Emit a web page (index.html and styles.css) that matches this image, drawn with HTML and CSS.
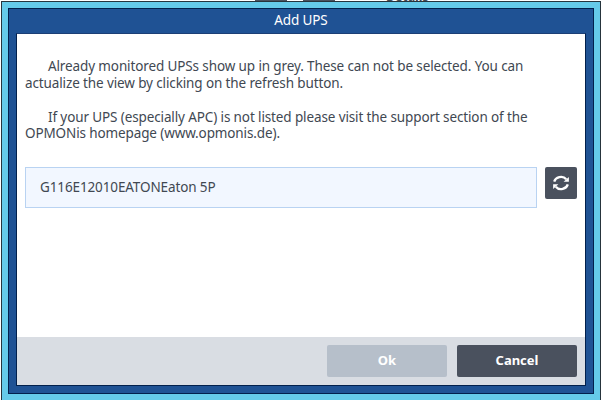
FILE: index.html
```html
<!DOCTYPE html>
<html lang="en">
<head>
    <meta charset="UTF-8">
    <meta name="viewport" content="width=device-width, initial-scale=1.0">
    <title>Add UPS</title>
    <link rel="stylesheet" href="styles.css">
</head>
<body>
    <div class="backdrop">
        <span class="bar bar-one"></span>
        <span class="bar bar-two"></span>
        <span class="behind">Details</span>
    </div>
    <div class="window">
        <div class="frame">
            <h1>Add UPS</h1>
            <div class="dialog">
                <div class="content">
                    <p class="hint">
                        <span class="line first">Already monitored UPSs show up in grey. These can not be selected. You can</span>
                        <span class="line">actualize the view by clicking on the refresh button.</span>
                    </p>
                    <p class="hint">
                        <span class="line first">If your UPS (especially APC) is not listed please visit the support section of the</span>
                        <span class="line last">OPMONis homepage (www.opmonis.de).</span>
                    </p>
                    <div class="device-row">
                        <div class="device">G116E12010EATONEaton 5P</div>
                        <button class="refresh" aria-label="Refresh">
                            <svg width="18" height="18" viewBox="0 0 18 18">
                                <path d="M2.2 7.6C3.4 3.2 10.6 .8 14.2 5.2" fill="none" stroke="#fff" stroke-width="2.3"/>
                                <path d="M16.9 2.9V7.8H11.6z" fill="#fff"/>
                                <path d="M15.8 10.4C14.6 14.8 7.4 17.2 3.8 12.8" fill="none" stroke="#fff" stroke-width="2.3"/>
                                <path d="M1.1 15.1V10.2H6.4z" fill="#fff"/>
                            </svg>
                        </button>
                    </div>
                </div>
                <div class="buttons">
                    <button class="ok" disabled>Ok</button>
                    <button class="cancel">Cancel</button>
                </div>
            </div>
        </div>
    </div>
</body>
</html>
```
FILE: styles.css
```css
* {
    box-sizing: border-box;
}
body {
    margin: 0;
    height: 400px;
    overflow: hidden;
    background-color: white;
    color: #414852;
    font-family: "Noto Sans", "Open Sans", sans-serif;
    font-size: 13.5px;
    letter-spacing: -0.12px;
}
.backdrop {
    position: relative;
    height: 1px;
    overflow: hidden;
}
.bar {
    position: absolute;
    top: 0;
    width: 32px;
    height: 1px;
    background: #4a515e;
}
.bar-one {
    left: 255px;
}
.bar-two {
    left: 303px;
}
.behind {
    position: absolute;
    left: 386px;
    bottom: -4px;
    font-size: 12.5px;
    font-weight: bold;
    line-height: 16px;
}
.window {
    height: 399px;
    margin-left: 1px;
    padding: 6px;
    border: 1px solid #26343c;
    border-bottom: none;
    background: #65cae9;
}
.frame {
    display: flex;
    flex-direction: column;
    height: 386px;
    padding: 0 7px 7px;
    border: 1px solid #02204c;
    background: #1f5294;
}
h1 {
    margin: 0;
    height: 24px;
    line-height: 22px;
    color: white;
    font-size: 13.5px;
    font-weight: normal;
    text-align: center;
}
.dialog {
    flex: 1;
    display: flex;
    flex-direction: column;
    border: 1px solid #02204c;
    border-top-color: #1c3f75;
    background: white;
}
.content {
    flex: 1;
    padding: 24px 8px 0;
}
.hint {
    margin: 0 0 17px;
}
.line {
    display: block;
    height: 17px;
    line-height: 17px;
    white-space: nowrap;
}
.first {
    padding-left: 23px;
}
.last {
    height: 16px;
    line-height: 15px;
}
.device-row {
    display: flex;
    gap: 8px;
    margin-top: 25px;
}
.device {
    width: 512px;
    height: 41px;
    padding-left: 14px;
    border: 1px solid #b9d3f2;
    background: #f2f7ff;
    line-height: 38px;
}
button {
    padding: 0;
    border: none;
    border-radius: 2px;
    background: #4a515e;
    color: white;
    font-family: inherit;
    font-size: 13px;
    font-weight: bold;
}
.refresh {
    display: flex;
    align-items: center;
    justify-content: center;
    width: 32px;
    height: 32px;
}
.buttons {
    display: flex;
    justify-content: flex-end;
    gap: 10px;
    height: 48px;
    padding: 8px 8px 0;
    background: #d9dde3;
}
.ok, .cancel {
    width: 120px;
    height: 32px;
    padding-bottom: 2px;
}
.ok {
    background: #b6bfca;
}
```
